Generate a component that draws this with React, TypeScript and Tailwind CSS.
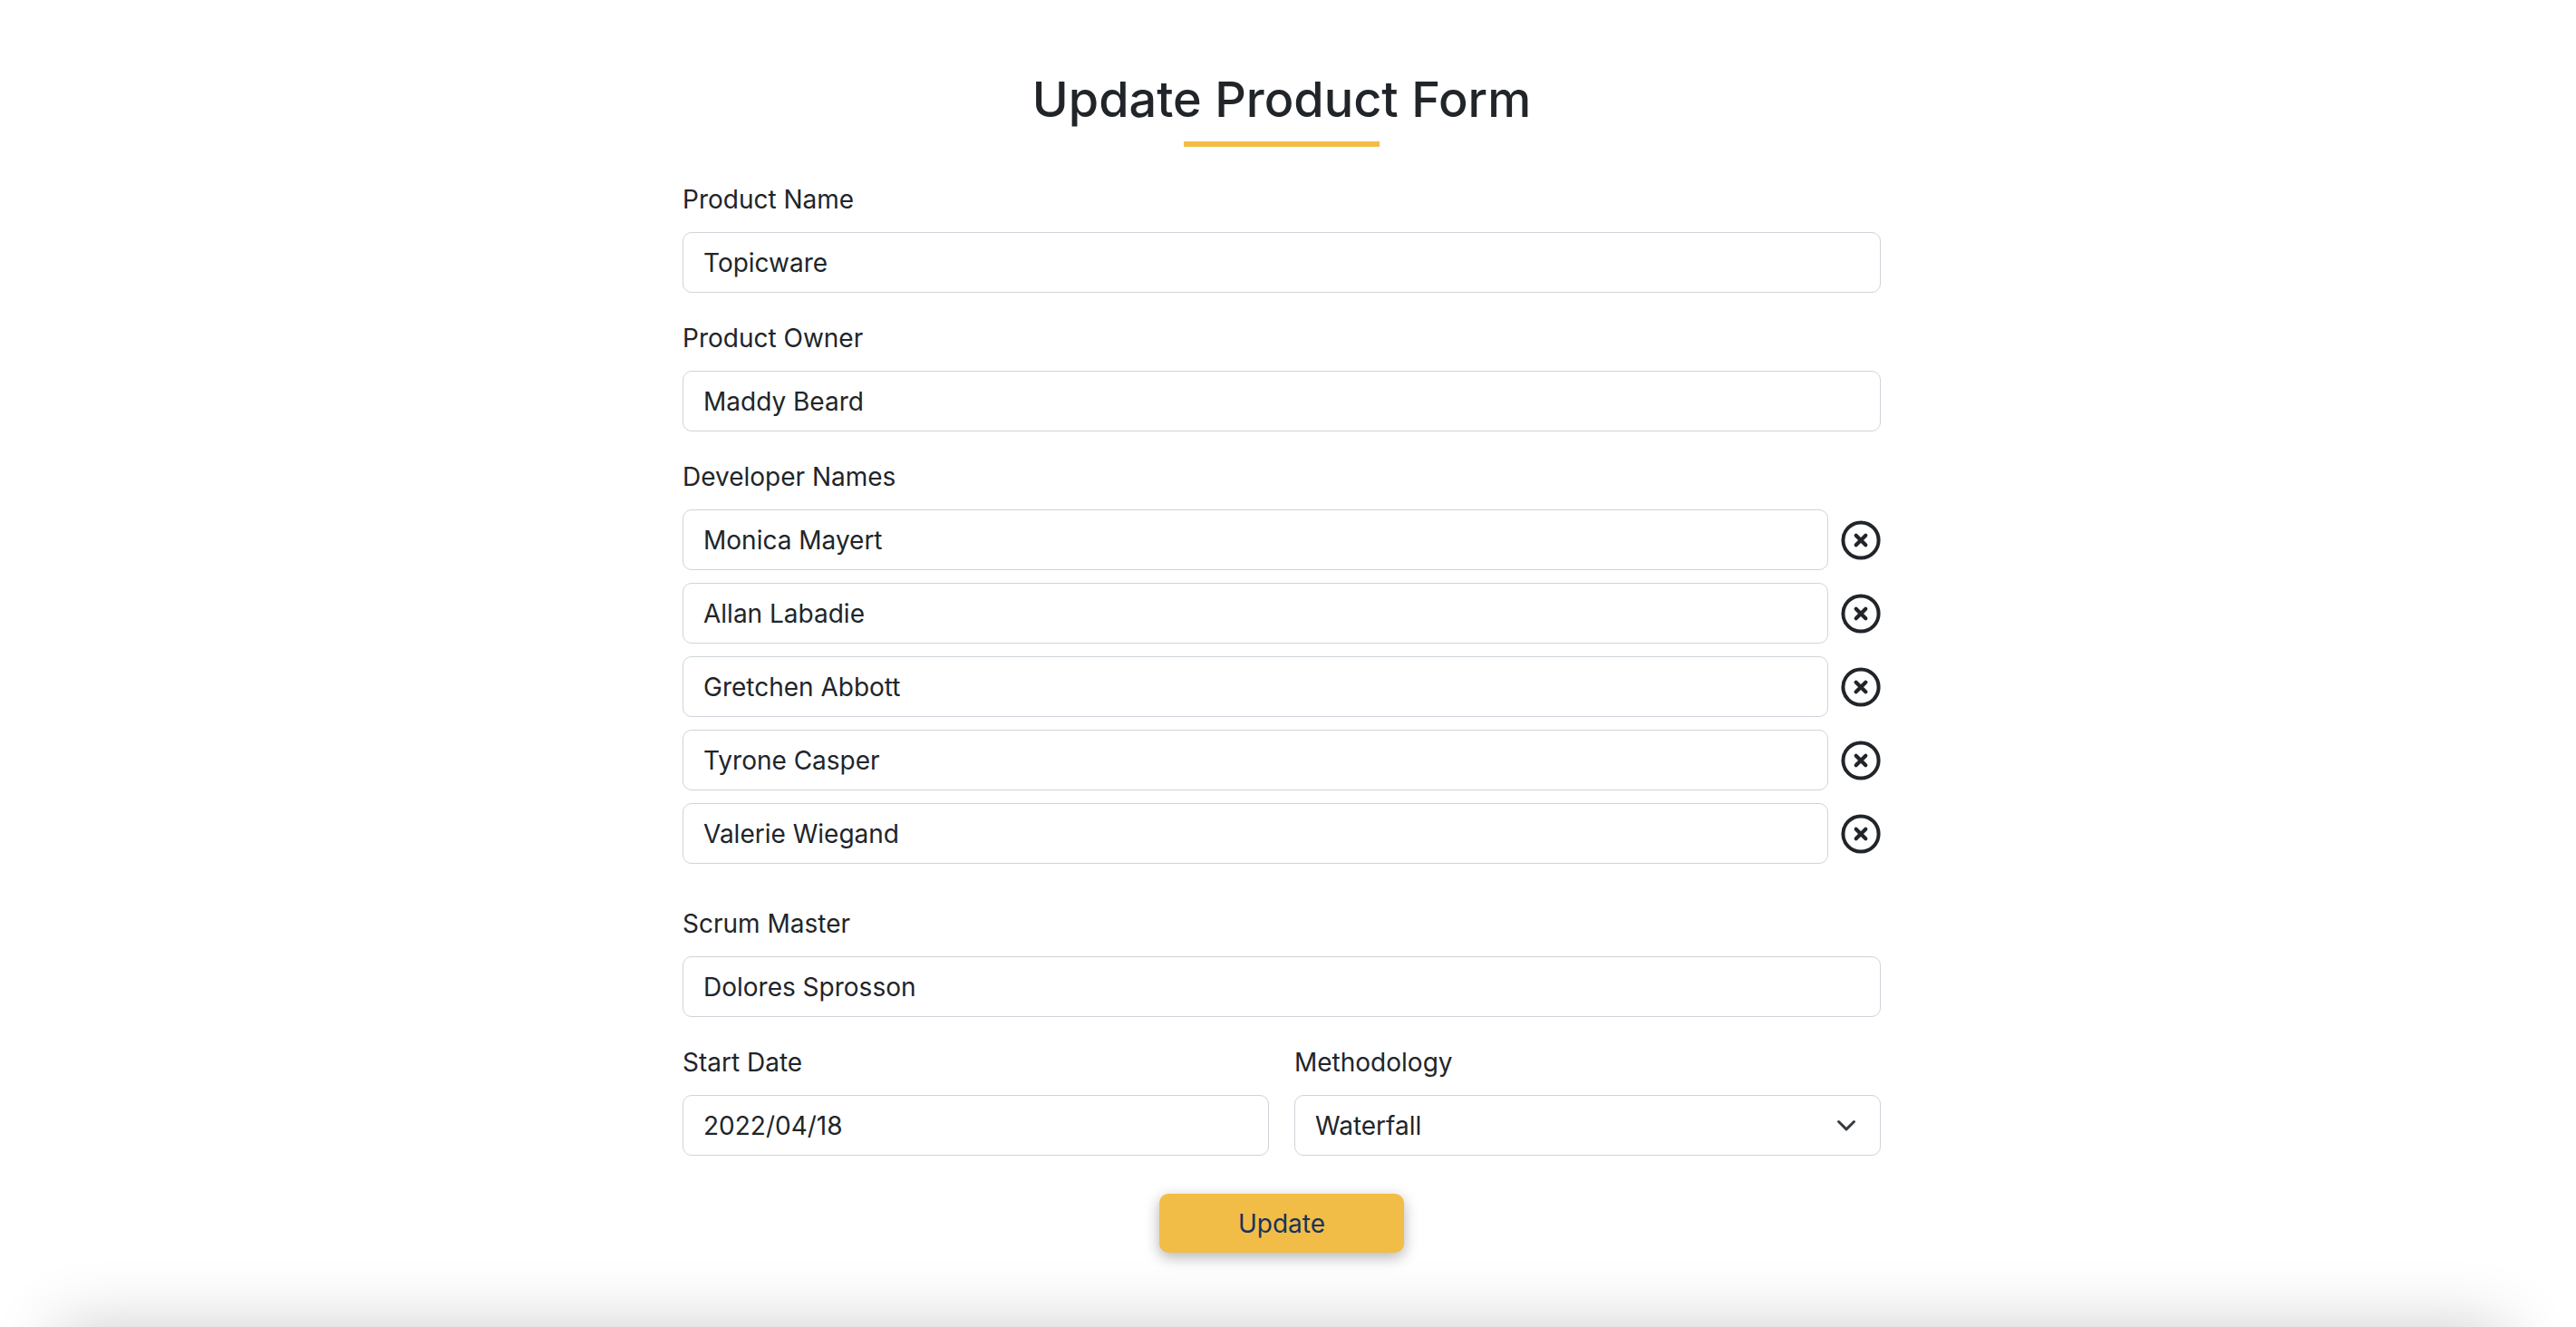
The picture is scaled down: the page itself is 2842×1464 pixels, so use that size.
import { useState } from "react";

const field =
  "block h-[67px] w-full min-w-0 rounded-[10px] border border-[#ced4da] bg-white px-[22px] text-[28px] leading-[42px] text-[#212529] outline-none focus:border-[#f2bd46]";
const labelText = "mb-[15px] block text-[28px] leading-[42px]";

function TextField({ id, label, value }: { id: string; label: string; value: string }) {
  return (
    <div>
      <label htmlFor={id} className={labelText}>
        {label}
      </label>
      <input id={id} type="text" defaultValue={value} className={field} />
    </div>
  );
}

function RemoveIcon() {
  return (
    <svg viewBox="0 0 44 44" className="size-11" fill="none" stroke="currentColor" aria-hidden="true">
      <circle cx="22" cy="22" r="19.6" strokeWidth="4" />
      <path d="M16.7 16.7 27.3 27.3M27.3 16.7 16.7 27.3" strokeWidth="4.2" strokeLinecap="round" />
    </svg>
  );
}

export default function App() {
  const [developers, setDevelopers] = useState([
    "Monica Mayert",
    "Allan Labadie",
    "Gretchen Abbott",
    "Tyrone Casper",
    "Valerie Wiegand",
  ]);

  return (
    <div className="relative min-h-screen overflow-hidden bg-white pr-[14px] font-['Inter',sans-serif] text-[#212529]">
      <main className="mx-auto max-w-[1322px] pt-[76px] pb-20">
        <h1 className="text-center text-[54px] leading-[68px] font-medium">Update Product Form</h1>
        <div className="mx-auto mt-3 h-[6px] w-[216px] bg-[#f2bd46]" />

        <form className="mt-[37px]" onSubmit={(e) => e.preventDefault()}>
          <div className="flex flex-col gap-[29px]">
            <TextField id="product-name" label="Product Name" value="Topicware" />
            <TextField id="product-owner" label="Product Owner" value="Maddy Beard" />

            <fieldset className="mb-4">
              <legend className={labelText}>Developer Names</legend>
              <div className="flex flex-col gap-[14px]">
                {developers.map((name, i) => (
                  <div key={name} className="flex items-center gap-[14px]">
                    <input type="text" aria-label={`Developer ${i + 1}`} defaultValue={name} className={field} />
                    <button
                      type="button"
                      aria-label={`Remove ${name}`}
                      className="shrink-0 cursor-pointer"
                      onClick={() => setDevelopers(developers.filter((d) => d !== name))}
                    >
                      <RemoveIcon />
                    </button>
                  </div>
                ))}
              </div>
            </fieldset>

            <TextField id="scrum-master" label="Scrum Master" value="Dolores Sprosson" />

            <div className="grid grid-cols-2 gap-7">
              <TextField id="start-date" label="Start Date" value="2022/04/18" />
              <div>
                <label htmlFor="methodology" className={labelText}>
                  Methodology
                </label>
                <div className="relative">
                  <select id="methodology" defaultValue="Waterfall" className={`${field} appearance-none`}>
                    <option>Agile</option>
                    <option>Waterfall</option>
                  </select>
                  <svg
                    viewBox="0 0 16 16"
                    className="pointer-events-none absolute inset-y-0 right-[25px] my-auto size-[26px]"
                    fill="none"
                    stroke="#343a40"
                    strokeWidth="1.8"
                    strokeLinecap="round"
                    strokeLinejoin="round"
                    aria-hidden="true"
                  >
                    <path d="m2.8 5.2 5.2 5.2 5.2-5.2" />
                  </svg>
                </div>
              </div>
            </div>
          </div>

          <button
            type="submit"
            className="mx-auto mt-[42px] block h-[65px] w-[270px] cursor-pointer rounded-[10px] bg-[#f2bd46] text-[28px] leading-[42px] text-[#17335f] shadow-[0_5px_16px_rgba(0,0,0,0.3)]"
          >
            Update
          </button>
        </form>
      </main>

      <div
        aria-hidden="true"
        className="absolute top-full right-[78px] left-[64px] h-60 shadow-[0_0_70px_rgba(0,0,0,0.2)]"
      />
    </div>
  );
}
